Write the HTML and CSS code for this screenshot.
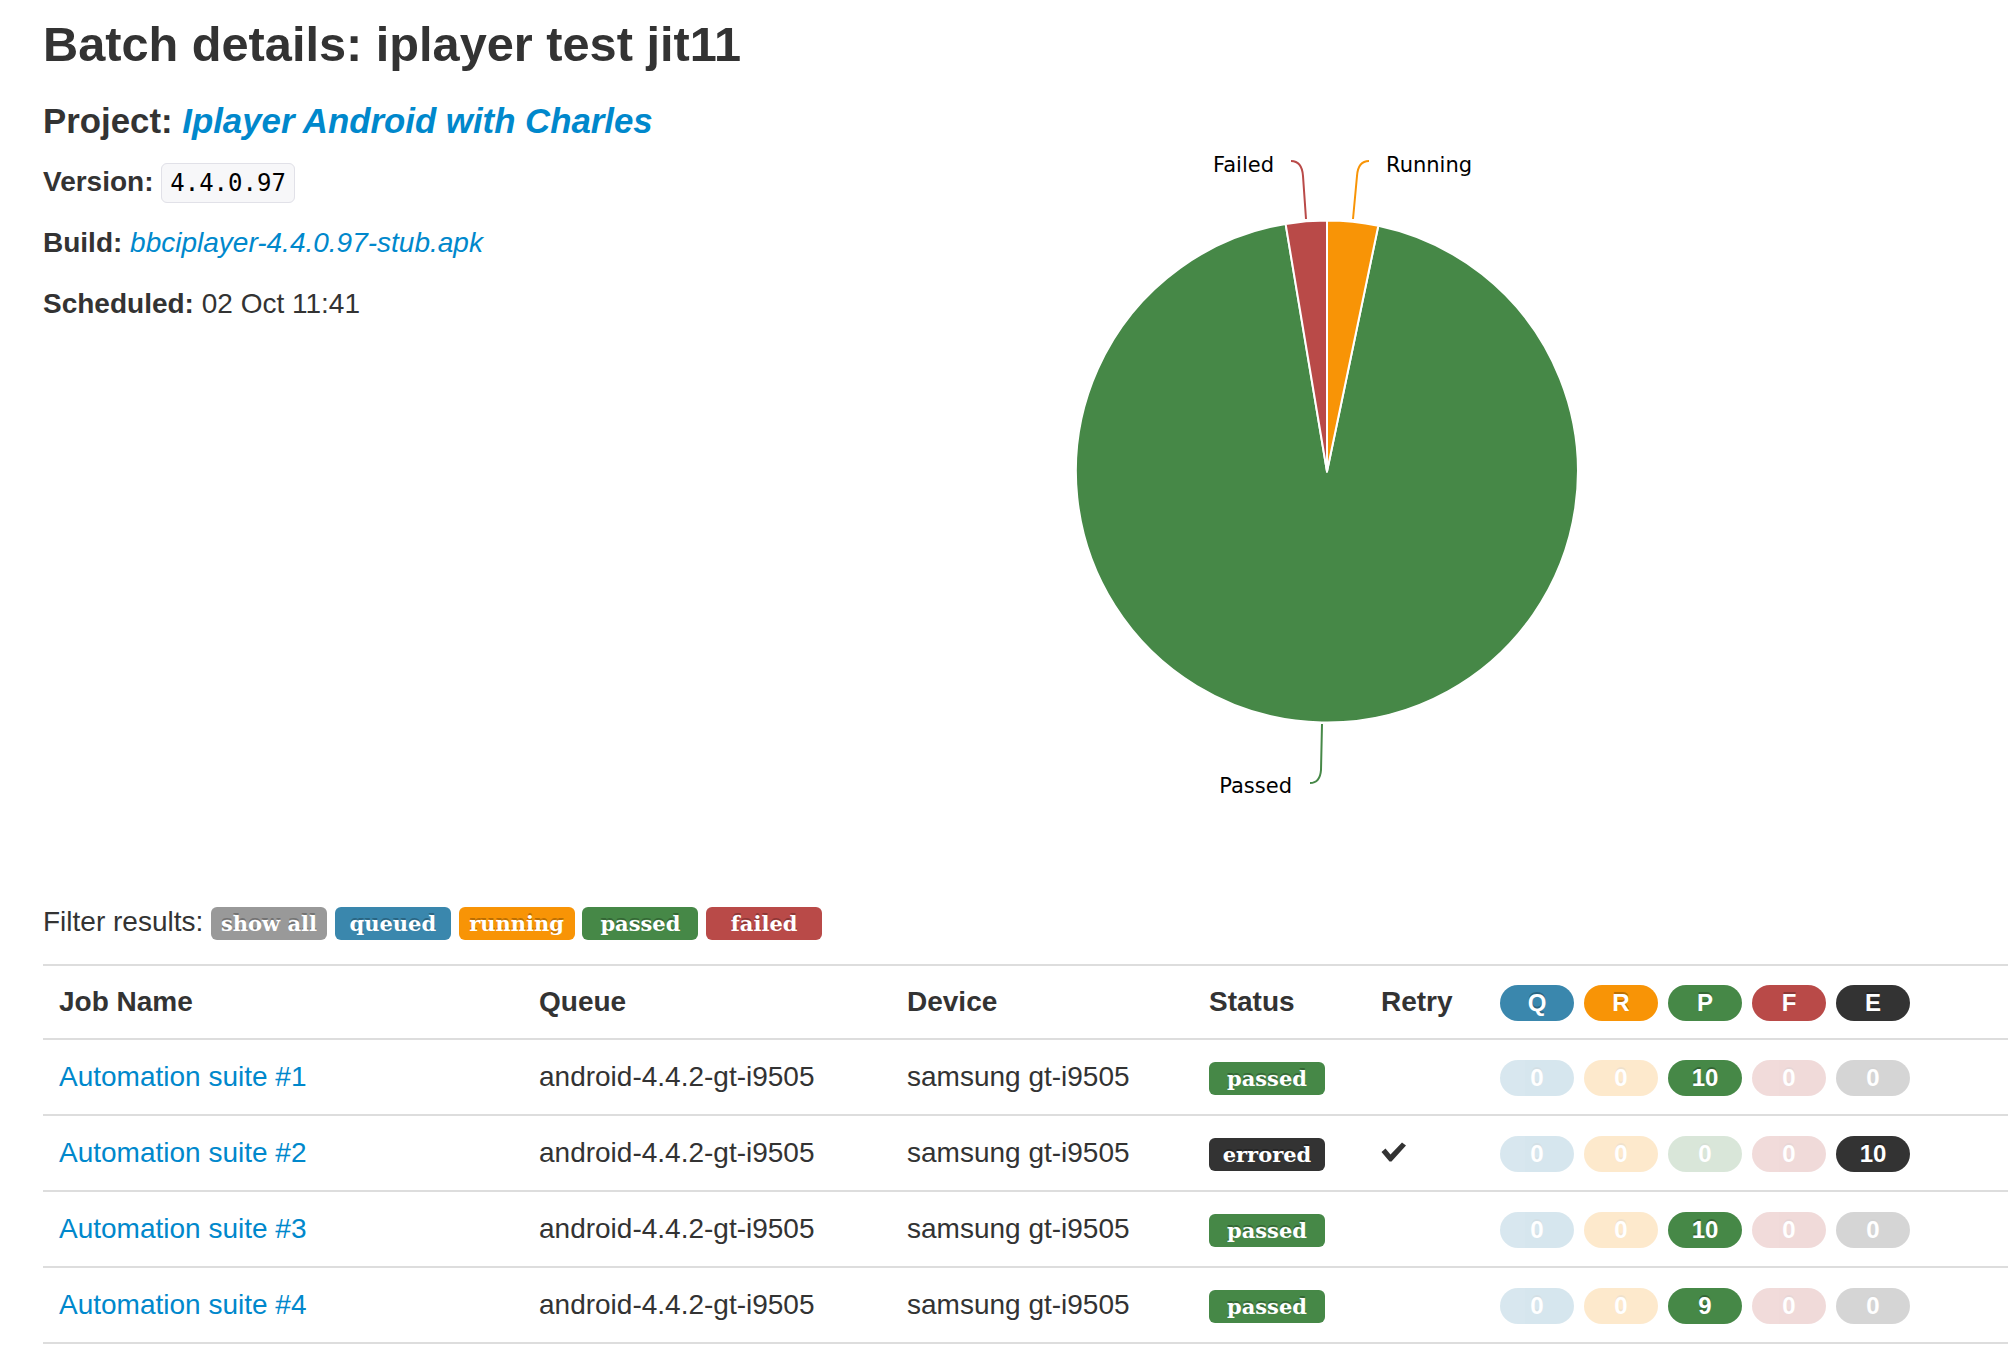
FILE: index.html
```html
<!DOCTYPE html>
<html lang="en">
<head>
<meta charset="utf-8">
<title>Batch details: iplayer test jit11</title>
<link rel="stylesheet" href="styles.css">
</head>
<body>
<div class="page">
  <div class="top">
    <div class="info">
      <h1 class="title">Batch details: iplayer test jit11</h1>
      <h3 class="project">Project: <a class="project-link" href="#">Iplayer Android with Charles</a></h3>
      <p class="meta"><strong>Version:</strong> <code class="version">4.4.0.97</code></p>
      <p class="meta"><strong>Build:</strong> <a class="build-link" href="#">bbciplayer-4.4.0.97-stub.apk</a></p>
      <p class="meta"><strong>Scheduled:</strong> 02 Oct 11:41</p>
    </div>
    <svg class="chart" width="700" height="860" viewBox="1027 0 700 860" xmlns="http://www.w3.org/2000/svg">
      <g stroke="#fff" stroke-width="2" stroke-linejoin="round">
        <path d="M1327,471.5 L1378.3,225.8 A251,251 0 1 1 1285.6,223.9 Z" fill="#468847"/>
        <path d="M1327,471.5 L1327,220.5 A251,251 0 0 1 1378.3,225.8 Z" fill="#f89406"/>
        <path d="M1327,471.5 L1285.6,223.9 A251,251 0 0 1 1327,220.5 Z" fill="#b94a48"/>
      </g>
      <g fill="none" stroke-width="2">
        <path d="M1291,161 Q1302,161 1303,176 L1306,219" stroke="#b94a48"/>
        <path d="M1369,161 Q1358,161 1357,176 L1353,219" stroke="#f89406"/>
        <path d="M1322,724 L1321,770 Q1320,783 1310,783" stroke="#468847"/>
      </g>
      <g class="chart-label">
        <text x="1274" y="172" text-anchor="end">Failed</text>
        <text x="1386" y="172">Running</text>
        <text x="1292" y="793" text-anchor="end">Passed</text>
      </g>
    </svg>
  </div>

  <div class="filters">Filter results: <span class="label label-grey">show all</span> <span class="label label-blue">queued</span> <span class="label label-orange">running</span> <span class="label label-green">passed</span> <span class="label label-red">failed</span></div>

  <table class="jobs">
    <colgroup>
      <col class="c-name">
      <col class="c-queue">
      <col class="c-device">
      <col class="c-status">
      <col class="c-retry">
      <col class="c-counts">
    </colgroup>
    <thead>
      <tr>
        <th>Job Name</th>
        <th>Queue</th>
        <th>Device</th>
        <th>Status</th>
        <th>Retry</th>
        <th><span class="counts"><span class="pill pill-blue">Q</span><span class="pill pill-orange">R</span><span class="pill pill-green">P</span><span class="pill pill-red">F</span><span class="pill pill-dark">E</span></span></th>
      </tr>
    </thead>
    <tbody>
      <tr>
        <td><a href="#">Automation suite #1</a></td>
        <td>android-4.4.2-gt-i9505</td>
        <td>samsung gt-i9505</td>
        <td><span class="label label-green">passed</span></td>
        <td></td>
        <td><span class="counts"><span class="pill pill-blue faded">0</span><span class="pill pill-orange faded">0</span><span class="pill pill-green">10</span><span class="pill pill-red faded">0</span><span class="pill pill-dark faded">0</span></span></td>
      </tr>
      <tr>
        <td><a href="#">Automation suite #2</a></td>
        <td>android-4.4.2-gt-i9505</td>
        <td>samsung gt-i9505</td>
        <td><span class="label label-dark">errored</span></td>
        <td><svg class="check" width="26" height="20" viewBox="0 0 26 20"><path d="M0.5,10 L4.5,6.5 L9.5,12.5 L21,0.5 L25,3.5 L10.5,19.5 L8.5,19.5 Z" fill="#333"/></svg></td>
        <td><span class="counts"><span class="pill pill-blue faded">0</span><span class="pill pill-orange faded">0</span><span class="pill pill-green faded">0</span><span class="pill pill-red faded">0</span><span class="pill pill-dark">10</span></span></td>
      </tr>
      <tr>
        <td><a href="#">Automation suite #3</a></td>
        <td>android-4.4.2-gt-i9505</td>
        <td>samsung gt-i9505</td>
        <td><span class="label label-green">passed</span></td>
        <td></td>
        <td><span class="counts"><span class="pill pill-blue faded">0</span><span class="pill pill-orange faded">0</span><span class="pill pill-green">10</span><span class="pill pill-red faded">0</span><span class="pill pill-dark faded">0</span></span></td>
      </tr>
      <tr>
        <td><a href="#">Automation suite #4</a></td>
        <td>android-4.4.2-gt-i9505</td>
        <td>samsung gt-i9505</td>
        <td><span class="label label-green">passed</span></td>
        <td></td>
        <td><span class="counts"><span class="pill pill-blue faded">0</span><span class="pill pill-orange faded">0</span><span class="pill pill-green">9</span><span class="pill pill-red faded">0</span><span class="pill pill-dark faded">0</span></span></td>
      </tr>
    </tbody>
  </table>
</div>
</body>
</html>
```

FILE: styles.css
```css
html, body {
  margin: 0;
  padding: 0;
  background: #fff;
}

body {
  font-family: "Liberation Sans", Arial, Helvetica, sans-serif;
  font-size: 28px;
  line-height: 40px;
  color: #333;
}

a {
  color: #0088cc;
  text-decoration: none;
}

.page {
  padding: 0 8px 0 43px;
}

.top {
  display: flex;
  align-items: flex-start;
}

.info {
  flex: 0 0 984px;
}

.chart {
  display: block;
  flex: 0 0 auto;
}

.chart-label {
  font-family: "DejaVu Sans", Verdana, sans-serif;
  font-size: 21px;
  fill: #000;
}

.title {
  margin: 16px 0 0;
  font-size: 48.7px;
  line-height: 56px;
  font-weight: bold;
  color: #333;
}

.project {
  margin: 29px 0 0;
  font-size: 34.8px;
  line-height: 40px;
  font-weight: bold;
  color: #333;
}

.project-link {
  font-style: italic;
}

.meta {
  margin: 21px 0 0;
}

.version {
  font-family: "DejaVu Sans Mono", "Liberation Mono", monospace;
  font-size: 24px;
  line-height: 1;
  color: #000;
  background: #f7f7f9;
  border: 1px solid #e1e1e8;
  border-radius: 6px;
  padding: 5px 8px;
}

.build-link {
  font-style: italic;
}

.filters {
  margin-top: 42px;
  height: 40px;
  line-height: 40px;
}

.label {
  display: inline-block;
  box-sizing: border-box;
  width: 116px;
  height: 33px;
  line-height: 33px;
  border-radius: 6px;
  font-family: "DejaVu Serif", "Liberation Serif", serif;
  font-size: 21px;
  font-weight: bold;
  color: #fff;
  text-align: center;
  text-shadow: 0 -2px 0 rgba(0, 0, 0, 0.25);
  vertical-align: baseline;
}

.label-grey { background: #999; }
.label-blue { background: #3a87ad; }
.label-orange { background: #f89406; }
.label-green { background: #468847; }
.label-red { background: #b94a48; }
.label-dark { background: #333; }

.jobs {
  margin-top: 22px;
  width: 100%;
  table-layout: fixed;
  border-collapse: separate;
  border-spacing: 0;
}

.c-name { width: 480px; }
.c-queue { width: 368px; }
.c-device { width: 302px; }
.c-status { width: 172px; }
.c-retry { width: 119px; }

.jobs th,
.jobs td {
  text-align: left;
  vertical-align: top;
  border-top: 2px solid #ddd;
  line-height: 40px;
  white-space: nowrap;
}

.jobs th {
  padding: 16px 16px;
  font-weight: bold;
}

.jobs td {
  padding: 17px 16px;
}

.jobs tbody tr:last-child td {
  border-bottom: 2px solid #ddd;
}

.counts {
  display: inline-flex;
  gap: 10px;
  vertical-align: baseline;
}

.pill {
  display: inline-block;
  width: 74px;
  height: 36px;
  line-height: 36px;
  border-radius: 18px;
  font-size: 24px;
  font-weight: bold;
  color: #fff;
  text-align: center;
  text-shadow: 0 -2px 0 rgba(0, 0, 0, 0.25);
}

.pill-blue { background: #3a87ad; }
.pill-orange { background: #f89406; }
.pill-green { background: #468847; }
.pill-red { background: #b94a48; }
.pill-dark { background: #333; }

.faded {
  opacity: 0.2;
}

.check {
  vertical-align: baseline;
}
```
